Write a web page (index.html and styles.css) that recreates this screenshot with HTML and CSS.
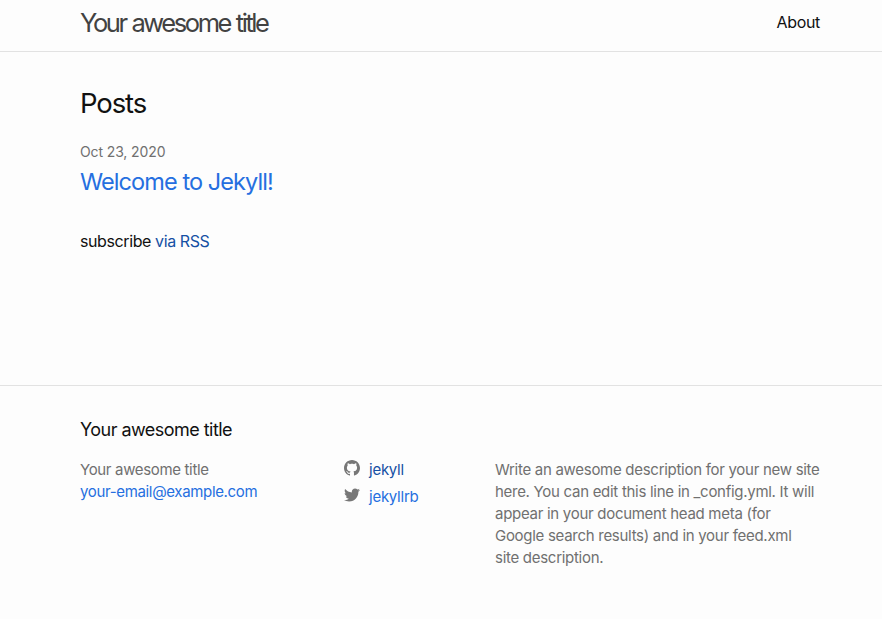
FILE: index.html
```html
<!DOCTYPE html>
<html lang="en">
<head>
<meta charset="utf-8">
<title>Your awesome title</title>
<link rel="stylesheet" href="styles.css">
</head>
<body>
<header class="site-header">
  <div class="wrapper header-row">
    <a class="site-title" href="#">Your awesome title</a>
    <nav><a class="page-link" href="#">About</a></nav>
  </div>
</header>
<main class="page-content">
  <div class="wrapper">
    <h2 class="post-list-heading">Posts</h2>
    <ul class="post-list">
      <li>
        <span class="post-meta">Oct 23, 2020</span>
        <h3><a class="post-link" href="#">Welcome to Jekyll!</a></h3>
      </li>
    </ul>
    <p class="subscribe">subscribe <a class="rss" href="#">via RSS</a></p>
  </div>
</main>
<footer class="site-footer">
  <div class="wrapper">
    <h2 class="footer-heading">Your awesome title</h2>
    <div class="footer-cols">
      <ul class="contact-list">
        <li>Your awesome title</li>
        <li><a class="email" href="#">your-email@example.com</a></li>
      </ul>
      <ul class="social-list">
        <li><a class="github" href="#"><svg class="icon" viewBox="0 0 16 16"><path d="M8 0C3.58 0 0 3.582 0 8c0 3.535 2.292 6.533 5.47 7.59.4.075.547-.172.547-.385 0-.19-.007-.693-.01-1.36-2.226.483-2.695-1.073-2.695-1.073-.364-.924-.89-1.17-.89-1.17-.725-.496.056-.486.056-.486.803.056 1.225.824 1.225.824.714 1.223 1.873.87 2.33.665.072-.517.278-.87.507-1.07-1.777-.2-3.644-.888-3.644-3.953 0-.873.31-1.587.823-2.147-.09-.202-.36-1.015.07-2.117 0 0 .67-.215 2.2.82.64-.178 1.32-.266 2-.27.68.004 1.36.092 2 .27 1.52-1.035 2.19-.82 2.19-.82.43 1.102.16 1.915.08 2.117.51.56.82 1.274.82 2.147 0 3.073-1.87 3.75-3.65 3.947.28.24.54.73.54 1.48 0 1.07-.01 1.93-.01 2.19 0 .21.14.46.55.38C13.71 14.53 16 11.53 16 8c0-4.418-3.582-8-8-8"/></svg><span>jekyll</span></a></li>
        <li><a class="twitter" href="#"><svg class="icon" viewBox="0 0 16 16"><path d="M15.969 3.058c-.586.26-1.217.436-1.878.515.675-.405 1.194-1.045 1.438-1.809-.632.375-1.332.647-2.076.793-.596-.636-1.446-1.033-2.387-1.033-1.806 0-3.27 1.464-3.27 3.27 0 .256.029.506.085.745C5.163 5.404 2.753 4.102 1.14 2.124c-.281.482-.443 1.044-.443 1.644 0 1.134.577 2.135 1.455 2.722-.536-.017-1.04-.164-1.481-.409v.041c0 1.584 1.127 2.906 2.623 3.206-.274.075-.563.115-.861.115-.211 0-.416-.021-.615-.059.416 1.299 1.624 2.245 3.055 2.271-1.119.877-2.529 1.4-4.061 1.4-.264 0-.524-.015-.78-.046 1.447.928 3.166 1.469 5.013 1.469 6.015 0 9.304-4.983 9.304-9.304 0-.142-.003-.283-.009-.423.639-.461 1.193-1.037 1.631-1.693"/></svg><span>jekyllrb</span></a></li>
      </ul>
      <p class="description">Write an awesome description for your new site<br>here. You can edit this line in _config.yml. It will<br>appear in your document head meta (for<br>Google search results) and in your feed.xml<br>site description.</p>
    </div>
  </div>
</footer>
</body>
</html>
```
FILE: styles.css
```css
* { box-sizing: border-box; margin: 0; padding: 0; }
body { font: 16px/24px Inter, sans-serif; color: #111; background: #fdfdfd; }
a { color: #256fe0; text-decoration: none; }
ul { list-style: none; }
.wrapper { width: 740px; margin-left: 80px; }
.site-header { height: 52px; border-bottom: 1px solid #e2e2e2; }
.header-row { display: flex; justify-content: space-between; }
.site-title { font-size: 25.5px; line-height: 46px; font-weight: 400; letter-spacing: -2.42px; word-spacing: 1px; color: #424242; }
.page-link { line-height: 45px; color: #111; letter-spacing: -0.35px; }
.page-content { height: 333px; padding-top: 30px; }
.post-list-heading { font-size: 27.5px; line-height: 42px; font-weight: 400; letter-spacing: -1.1px; }
.post-list { margin-top: 17px; }
.post-meta { display: block; font-size: 14px; line-height: 22px; letter-spacing: -0.12px; color: #707070; }
.post-list h3 { font-size: 23.5px; line-height: 38px; font-weight: 400; letter-spacing: -0.92px; }
.subscribe { margin-top: 28px; letter-spacing: -0.4px; }
.rss { color: #1650a4; }
.site-footer { height: 234px; border-top: 1px solid #e2e2e2; padding-top: 30px; }
.footer-heading { font-size: 18px; line-height: 27px; font-weight: 400; letter-spacing: -0.54px; }
.footer-cols { display: grid; grid-template-columns: 264px 151px 325px; margin-top: 16px; font-size: 15px; line-height: 22px; letter-spacing: -0.34px; color: #707070; }
.social-list { letter-spacing: -0.25px; }
.social-list li { height: 27px; }
.social-list a { display: flex; }
.social-list .github { color: #1650a4; }
.icon { width: 16px; height: 16px; margin: 1px 9px 0 0; fill: #777; }
.description { white-space: nowrap; letter-spacing: -0.285px; }
```
